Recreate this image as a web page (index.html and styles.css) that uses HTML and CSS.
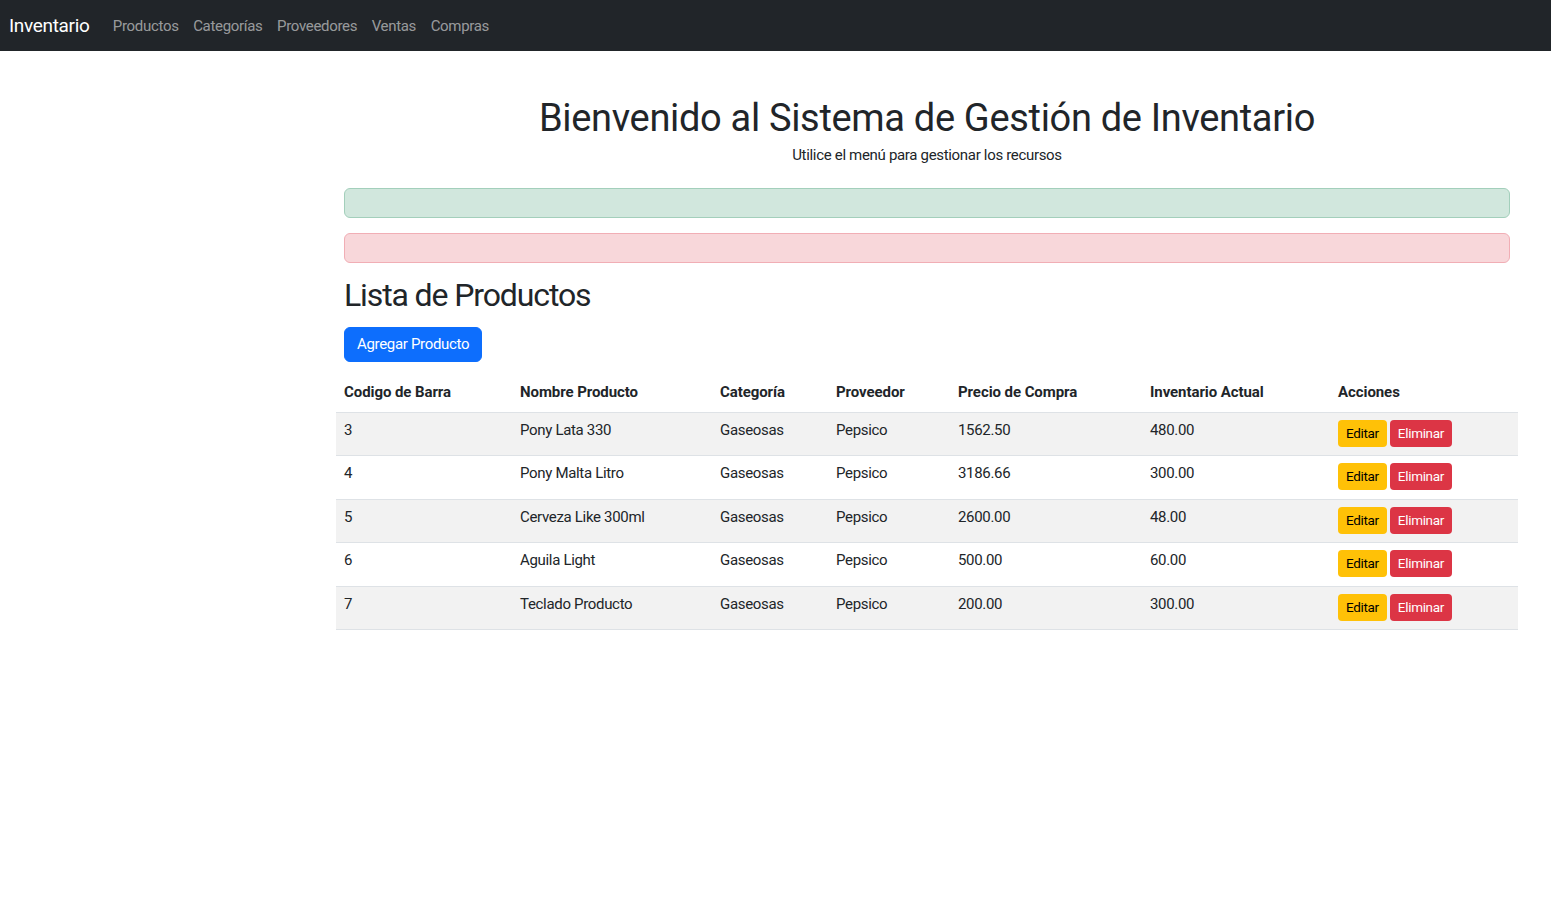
FILE: index.html
```html
<!DOCTYPE html>
<html lang="es">
<head>
<meta charset="utf-8">
<title>Inventario</title>
<link rel="stylesheet" href="styles.css">
</head>
<body>
<nav class="navbar">
  <a class="brand" href="#">Inventario</a>
  <ul class="nav-links">
    <li><a href="#">Productos</a></li>
    <li><a href="#">Categorías</a></li>
    <li><a href="#">Proveedores</a></li>
    <li><a href="#">Ventas</a></li>
    <li><a href="#">Compras</a></li>
  </ul>
</nav>
<div class="layout">
  <aside class="sidebar"></aside>
  <main class="main">
    <header class="hero">
      <h1 class="hero-title">Bienvenido al Sistema de Gestión de Inventario</h1>
      <p class="hero-lead">Utilice el menú para gestionar los recursos</p>
    </header>
    <div class="alert alert-success"></div>
    <div class="alert alert-danger"></div>
    <h2 class="section-title">Lista de Productos</h2>
    <a class="btn btn-primary" href="#">Agregar Producto</a>
    <table class="table">
      <colgroup>
        <col class="c1"><col class="c2"><col class="c3"><col class="c4"><col class="c5"><col class="c6"><col class="c7">
      </colgroup>
      <thead>
        <tr>
          <th>Codigo de Barra</th>
          <th>Nombre Producto</th>
          <th>Categoría</th>
          <th>Proveedor</th>
          <th>Precio de Compra</th>
          <th>Inventario Actual</th>
          <th>Acciones</th>
        </tr>
      </thead>
      <tbody>
        <tr>
          <td>3</td><td>Pony Lata 330</td><td>Gaseosas</td><td>Pepsico</td><td>1562.50</td><td>480.00</td>
          <td class="actions"><a class="btn-sm btn-warning" href="#">Editar</a><a class="btn-sm btn-danger" href="#">Eliminar</a></td>
        </tr>
        <tr>
          <td>4</td><td>Pony Malta Litro</td><td>Gaseosas</td><td>Pepsico</td><td>3186.66</td><td>300.00</td>
          <td class="actions"><a class="btn-sm btn-warning" href="#">Editar</a><a class="btn-sm btn-danger" href="#">Eliminar</a></td>
        </tr>
        <tr>
          <td>5</td><td>Cerveza Like 300ml</td><td>Gaseosas</td><td>Pepsico</td><td>2600.00</td><td>48.00</td>
          <td class="actions"><a class="btn-sm btn-warning" href="#">Editar</a><a class="btn-sm btn-danger" href="#">Eliminar</a></td>
        </tr>
        <tr>
          <td>6</td><td>Aguila Light</td><td>Gaseosas</td><td>Pepsico</td><td>500.00</td><td>60.00</td>
          <td class="actions"><a class="btn-sm btn-warning" href="#">Editar</a><a class="btn-sm btn-danger" href="#">Eliminar</a></td>
        </tr>
        <tr>
          <td>7</td><td>Teclado Producto</td><td>Gaseosas</td><td>Pepsico</td><td>200.00</td><td>300.00</td>
          <td class="actions"><a class="btn-sm btn-warning" href="#">Editar</a><a class="btn-sm btn-danger" href="#">Eliminar</a></td>
        </tr>
      </tbody>
    </table>
  </main>
</div>
</body>
</html>
```

FILE: styles.css
```css
* { box-sizing: border-box; }

html, body {
  margin: 0;
  padding: 0;
}

body {
  font-family: Roboto, "Liberation Sans", sans-serif;
  font-size: 16px;
  line-height: 24px;
  color: #212529;
  background: #fff;
  letter-spacing: -0.02em;
}

a { text-decoration: none; }

/* Navbar */
.navbar {
  height: 51px;
  background: #212529;
  display: flex;
  align-items: center;
  padding: 0 9px;
}

.brand {
  color: #fff;
  font-size: 19px;
  line-height: 30px;
  margin-right: 16px;
}

.nav-links {
  list-style: none;
  margin: 0;
  padding: 0;
  display: flex;
}

.nav-links a {
  display: block;
  padding: 8px 7.3px;
  color: rgba(255, 255, 255, 0.55);
  font-size: 15px;
}

/* Layout */
.layout {
  display: flex;
}

.sidebar {
  flex: 0 0 344px;
}

.main {
  flex: 1;
  min-width: 0;
  margin-right: 41px;
}

.hero {
  text-align: center;
  padding-top: 44px;
}

.hero-title {
  margin: 0 0 2px;
  font-size: 38px;
  font-weight: 400;
  line-height: 46px;
}

.hero-lead {
  margin: 0;
  font-size: 15px;
  line-height: 24px;
}

.alert {
  height: 30px;
  border: 1px solid transparent;
  border-radius: 6px;
  margin-top: 15px;
}

.alert-success {
  margin-top: 21px;
  background: #d1e7dd;
  border-color: #a3cfbb;
}

.alert-danger {
  background: #f8d7da;
  border-color: #f1aeb5;
}

.section-title {
  margin: 13px 0 13px;
  font-size: 32px;
  font-weight: 400;
  line-height: 38px;
  letter-spacing: -0.035em;
}

.btn {
  display: inline-block;
  height: 35px;
  padding: 0 12px;
  line-height: 33px;
  border: 1px solid transparent;
  border-radius: 6px;
  font-size: 15px;
}

.btn-primary {
  background: #0d6efd;
  border-color: #0d6efd;
  color: #fff;
}

/* Table */
.table {
  width: calc(100% + 16px);
  margin: 9px -8px 0;
  border-collapse: collapse;
  table-layout: fixed;
  vertical-align: top;
}

.c1 { width: 176px; }
.c2 { width: 200px; }
.c3 { width: 116px; }
.c4 { width: 122px; }
.c5 { width: 192px; }
.c6 { width: 188px; }
.c7 { width: 188px; }

.table th {
  text-align: left;
  font-weight: 700;
  font-size: 15px;
  letter-spacing: -0.005em;
  padding: 9px 8px 8px;
  border-bottom: 1px solid #dee2e6;
  vertical-align: bottom;
}

.table td {
  padding: 5px 8px;
  font-size: 15px;
  border-bottom: 1px solid #dee2e6;
  vertical-align: top;
}

.table tbody tr:nth-child(odd) td {
  background: #f2f2f2;
}

.table td.actions {
  padding: 7px 8px 8.4px;
  white-space: nowrap;
  font-size: 0;
  line-height: 0;
}

.btn-sm {
  display: inline-block;
  vertical-align: top;
  height: 27px;
  padding: 0 8px;
  line-height: 27px;
  font-size: 13.5px;
  border-radius: 4px;
  margin-right: 3px;
}

.btn-warning {
  background: #ffc107;
  color: #000;
}

.btn-danger {
  background: #dc3545;
  color: #fff;
}
```
